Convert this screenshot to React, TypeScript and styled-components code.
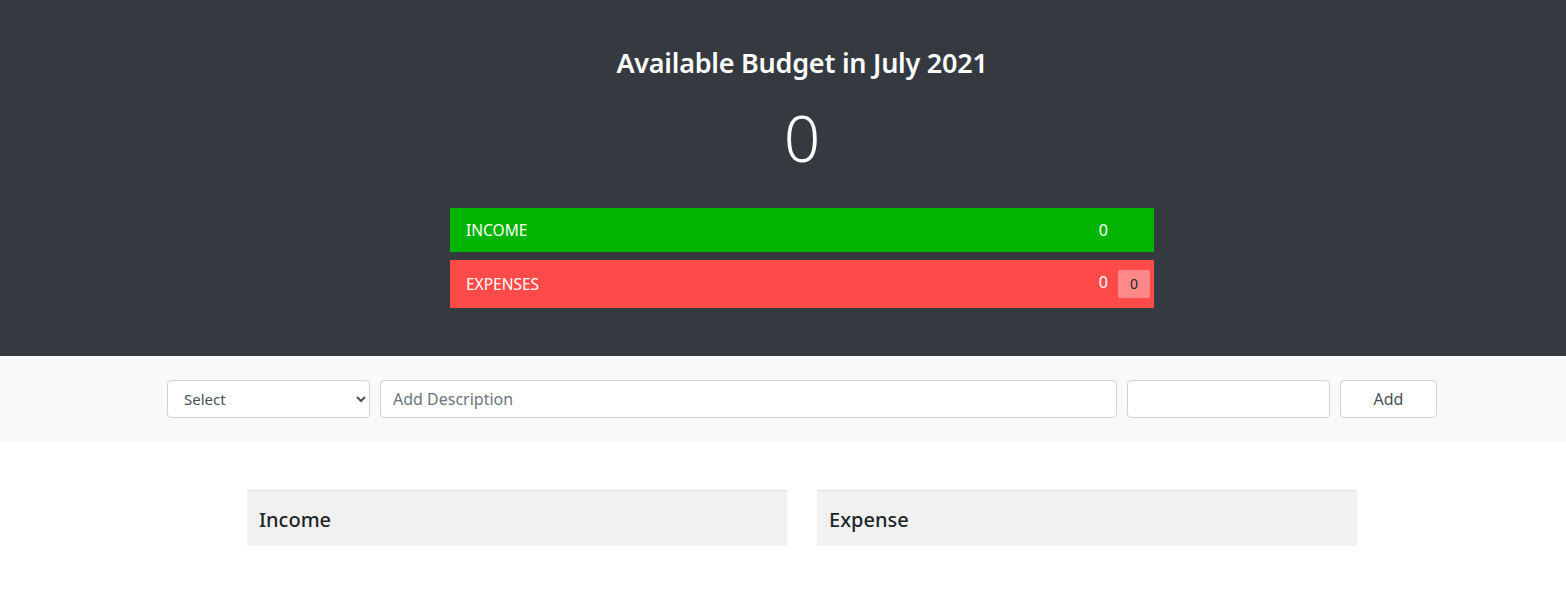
import React from "react";
import styled, { createGlobalStyle } from "styled-components";

const GlobalStyle = createGlobalStyle`
  * { box-sizing: border-box; }
  html, body { margin: 0; padding: 0; background: #ffffff; }
  body {
    font-family: "Segoe UI", "Noto Sans", "Open Sans", "Liberation Sans", sans-serif;
    color: #212529;
    font-size: 16px;
    line-height: 1.5;
  }
`;

const Header = styled.header`
  background: #343a40;
  color: #ffffff;
  padding: 46px 0 48px 38px;
`;

const HeaderInner = styled.div`
  display: flex;
  flex-direction: column;
  align-items: center;
`;

const Title = styled.h3`
  margin: 0 0 8px;
  font-size: 27px;
  letter-spacing: -0.25px;
  font-weight: 600;
  line-height: 34px;
`;

const BigAmount = styled.div`
  font-size: 64px;
  font-weight: 300;
  line-height: 76px;
  margin: 12px 0 32px;
`;

const Bars = styled.div`
  width: 704px;
  display: flex;
  flex-direction: column;
  gap: 8px;
`;

const Bar = styled.div<{ $kind: "income" | "expense" }>`
  display: flex;
  align-items: center;
  justify-content: space-between;
  background: ${(p) => (p.$kind === "income" ? "#00b400" : "#ff4a4a")};
  color: #ffffff;
  height: ${(p) => (p.$kind === "income" ? "44px" : "48px")};
  padding: 0 4px 0 16px;
  font-size: 15.5px;
  line-height: 20px;
`;

const BarLabel = styled.span`
  text-transform: uppercase;
`;

const BarRight = styled.div`
  display: flex;
  align-items: center;
  gap: 10px;
`;

const BarValue = styled.span<{ $raise?: boolean }>`
  font-size: 16px;
  margin-top: ${(p) => (p.$raise ? "-4px" : "0")};
`;

const Badge = styled.span<{ $hidden?: boolean }>`
  width: 32px;
  height: 28px;
  display: inline-flex;
  align-items: center;
  justify-content: center;
  border-radius: 2px;
  background: ${(p) => (p.$hidden ? "transparent" : "rgba(255, 255, 255, 0.35)")};
  color: #212529;
  font-size: 14px;
  visibility: ${(p) => (p.$hidden ? "hidden" : "visible")};
`;

const FormSection = styled.section`
  background: #f8f9fa;
  padding: 24px 0 24px 38px;
`;

const FormRow = styled.form`
  width: 1270px;
  margin: 0 auto;
  display: grid;
  grid-template-columns: 203px 1fr 203px 97px;
  gap: 10px;
`;

const Field = styled.input`
  height: 38px;
  border: 1px solid #ced4da;
  border-radius: 4px;
  background: #ffffff;
  padding: 0 12px;
  font-family: inherit;
  font-size: 16px;
  color: #212529;
  &::placeholder { color: #6c757d; }
`;

const SelectBox = styled.select`
  height: 38px;
  border: 1px solid #ced4da;
  border-radius: 4px;
  background: #ffffff;
  padding: 0 8px 0 12px;
  font-family: inherit;
  font-size: 15px;
  color: #495057;
`;

const AddButton = styled.button`
  height: 38px;
  border: 1px solid #ced4da;
  border-radius: 4px;
  background: #ffffff;
  font-family: inherit;
  font-size: 16px;
  color: #495057;
`;

const Lists = styled.main`
  padding: 48px 0 0 38px;
`;

const ListsGrid = styled.div`
  width: 1110px;
  margin: 0 auto;
  display: grid;
  grid-template-columns: 1fr 1fr;
  gap: 30px;
`;

const ListHeader = styled.div`
  background: #f1f1f1;
  border-top: 1px solid #dee2e6;
  height: 56px;
  display: flex;
  align-items: center;
  padding: 2px 12px 0;
`;

const ListTitle = styled.h5`
  margin: 0;
  font-size: 20px;
  font-weight: 500;
  line-height: 1.2;
  color: #212529;
`;

export default function App() {
  return (
    <>
      <GlobalStyle />
      <Header>
        <HeaderInner>
          <Title>Available Budget in July 2021</Title>
          <BigAmount>0</BigAmount>
          <Bars>
            <Bar $kind="income">
              <BarLabel>Income</BarLabel>
              <BarRight>
                <BarValue>0</BarValue>
                <Badge $hidden>0</Badge>
              </BarRight>
            </Bar>
            <Bar $kind="expense">
              <BarLabel>Expenses</BarLabel>
              <BarRight>
                <BarValue $raise>0</BarValue>
                <Badge>0</Badge>
              </BarRight>
            </Bar>
          </Bars>
        </HeaderInner>
      </Header>
      <FormSection>
        <FormRow onSubmit={(e) => e.preventDefault()}>
          <SelectBox defaultValue="">
            <option value="">Select</option>
            <option value="inc">Income</option>
            <option value="exp">Expense</option>
          </SelectBox>
          <Field type="text" placeholder="Add Description" />
          <Field type="number" />
          <AddButton type="submit">Add</AddButton>
        </FormRow>
      </FormSection>
      <Lists>
        <ListsGrid>
          <ListHeader>
            <ListTitle>Income</ListTitle>
          </ListHeader>
          <ListHeader>
            <ListTitle>Expense</ListTitle>
          </ListHeader>
        </ListsGrid>
      </Lists>
    </>
  );
}
